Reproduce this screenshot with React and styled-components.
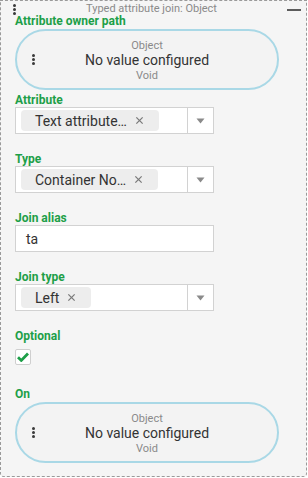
import styled, { createGlobalStyle } from "styled-components";

const green = "#1d9f48";

const GlobalStyle = createGlobalStyle`
  * { box-sizing: border-box; }
  body {
    margin: 0;
    background: #ffffff;
    font-family: Roboto, "Noto Sans", sans-serif;
  }
`;

const Panel = styled.div`
  width: 307px;
  height: 477px;
  background: #f5f5f5;
  border: 1px dashed #9a9a9a;
  border-radius: 0 0 4px 4px;
  padding: 0 0 0 14px;
`;

const Header = styled.div`
  display: flex;
  align-items: center;
  height: 14px;
  margin-left: -2px;
  padding-right: 5px;
`;

const Title = styled.div`
  flex: 1;
  text-align: center;
  font-size: 11px;
  color: #8a8a8a;
  line-height: 14px;
  padding-top: 2px;
`;

const Minus = styled.div`
  width: 14px;
  height: 2px;
  background: #5c5c5c;
  margin-top: 3px;
`;

const Dots = styled.div`
  display: flex;
  flex-direction: column;
  gap: 1px;
  margin-top: ${(p) => p.top || 0}px;

  span {
    width: 3px;
    height: 3px;
    border-radius: 50%;
    background: #3a3a3a;
  }
`;

const Label = styled.div`
  font-size: 12px;
  font-weight: 700;
  line-height: 13px;
  color: ${green};
  margin-top: ${(p) => p.gap}px;
`;

const Pill = styled.div`
  width: 264px;
  height: 61px;
  margin-top: 1px;
  border: 2px solid #a9d8e6;
  border-radius: 31px;
  background: #f3f3f3;
  display: flex;
  align-items: center;
  padding: 0 15px;
`;

const PillBody = styled.div`
  flex: 1;
  display: flex;
  flex-direction: column;
  align-items: center;
  margin-top: 2px;
`;

const Small = styled.div`
  font-size: 11px;
  line-height: 13px;
  color: #8a8a8a;
`;

const Value = styled.div`
  font-size: 14px;
  line-height: 17px;
  color: #333333;
`;

const Box = styled.div`
  width: 199px;
  height: 27px;
  background: #ffffff;
  border: 1px solid #d2d2d2;
  display: flex;
  align-items: center;
`;

const ChipArea = styled.div`
  flex: 1;
  display: flex;
  align-items: center;
  padding-left: 5px;
  height: 100%;
`;

const Chip = styled.div`
  display: flex;
  align-items: center;
  gap: 8px;
  height: 21px;
  background: #ededed;
  border-radius: 4px;
  padding: 0 15px 0 14px;
  font-size: 14px;
  color: #333333;
  white-space: nowrap;
`;

const Close = styled.svg`
  flex: none;
  width: 9px;
  height: 9px;
`;

const ArrowCell = styled.div`
  width: 26px;
  height: 100%;
  border-left: 1px solid #d2d2d2;
  display: flex;
  align-items: center;
  justify-content: center;
`;

const Input = styled(Box)`
  padding-left: 10px;
  font-size: 14px;
  color: #333333;
`;

const Check = styled.div`
  width: 16px;
  height: 16px;
  margin-top: 6px;
  background: #ffffff;
  border: 1px solid #cfcfcf;
  border-radius: 2px;
  display: flex;
  align-items: center;
  justify-content: center;
`;

function ThreeDots({ top }) {
  return (
    <Dots top={top}>
      <span />
      <span />
      <span />
    </Dots>
  );
}

function ValuePill() {
  return (
    <Pill>
      <ThreeDots />
      <PillBody>
        <Small>Object</Small>
        <Value>No value configured</Value>
        <Small>Void</Small>
      </PillBody>
      <div style={{ width: 3 }} />
    </Pill>
  );
}

function Select({ value }) {
  return (
    <Box>
      <ChipArea>
        <Chip>
          <span>{value}</span>
          <Close viewBox="0 0 10 10">
            <path d="M1.5 1.5 8.5 8.5M8.5 1.5 1.5 8.5" stroke="#7a7a7a" strokeWidth="1.4" />
          </Close>
        </Chip>
      </ChipArea>
      <ArrowCell>
        <svg width="9" height="6" viewBox="0 0 9 6">
          <path d="M0.5 0.5h8L4.5 5.5z" fill="#8a8a8a" />
        </svg>
      </ArrowCell>
    </Box>
  );
}

export default function App() {
  return (
    <>
      <GlobalStyle />
      <Panel>
        <Header>
          <ThreeDots top={2} />
          <Title>Typed attribute join: Object</Title>
          <Minus />
        </Header>

        <Label gap={0}>Attribute owner path</Label>
        <ValuePill />

        <Label gap={4}>Attribute</Label>
        <Select value="Text attribute…" />

        <Label gap={19}>Type</Label>
        <Select value="Container No…" />

        <Label gap={19}>Join alias</Label>
        <Input>ta</Input>

        <Label gap={19}>Join type</Label>
        <Select value="Left" />

        <Label gap={19}>Optional</Label>
        <Check>
          <svg width="12" height="10" viewBox="0 0 12 10">
            <path d="M1 5.2 4.3 8.4 11 1.6" stroke={green} strokeWidth="2.8" fill="none" />
          </svg>
        </Check>

        <Label gap={23}>On</Label>
        <ValuePill />
      </Panel>
    </>
  );
}
